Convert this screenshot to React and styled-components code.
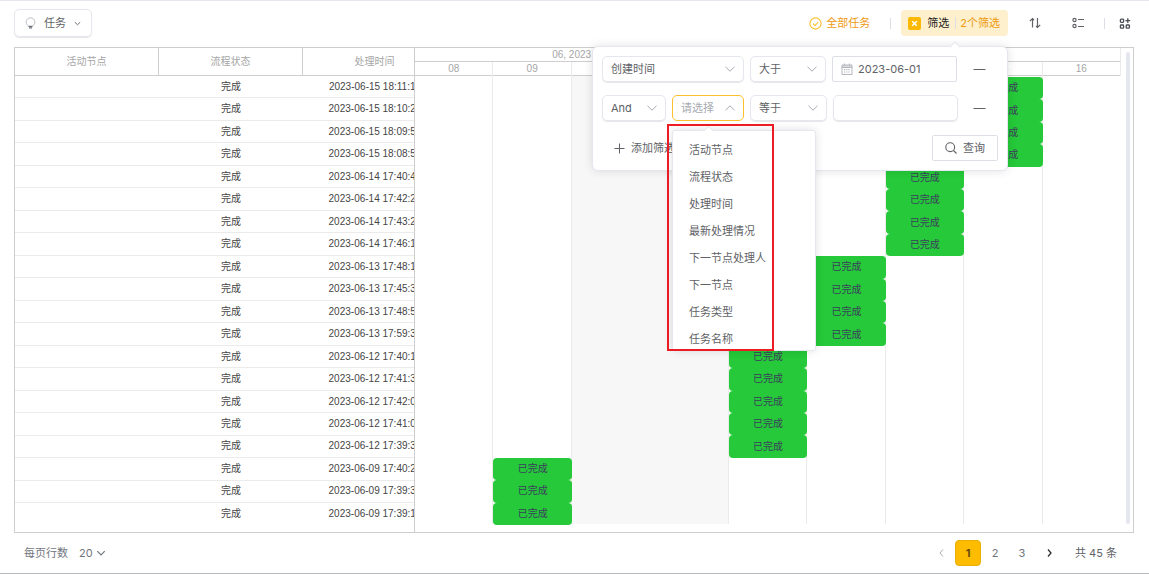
import React from "react"
import styled, { createGlobalStyle } from "styled-components"

const tasks = [
  { time: "2023-06-15 18:11:12", day: 15 },
  { time: "2023-06-15 18:10:28", day: 15 },
  { time: "2023-06-15 18:09:54", day: 15 },
  { time: "2023-06-15 18:08:51", day: 15 },
  { time: "2023-06-14 17:40:47", day: 14 },
  { time: "2023-06-14 17:42:23", day: 14 },
  { time: "2023-06-14 17:43:25", day: 14 },
  { time: "2023-06-14 17:46:18", day: 14 },
  { time: "2023-06-13 17:48:16", day: 13 },
  { time: "2023-06-13 17:45:32", day: 13 },
  { time: "2023-06-13 17:48:53", day: 13 },
  { time: "2023-06-13 17:59:35", day: 13 },
  { time: "2023-06-12 17:40:16", day: 12 },
  { time: "2023-06-12 17:41:36", day: 12 },
  { time: "2023-06-12 17:42:05", day: 12 },
  { time: "2023-06-12 17:41:02", day: 12 },
  { time: "2023-06-12 17:39:33", day: 12 },
  { time: "2023-06-09 17:40:24", day: 9 },
  { time: "2023-06-09 17:39:38", day: 9 },
  { time: "2023-06-09 17:39:14", day: 9 },
]

const days = ["08", "09", "10", "11", "12", "13", "14", "15", "16"]
const weekend = ["10", "11"]
const firstDay = 8

const fields = [
  "活动节点",
  "流程状态",
  "处理时间",
  "最新处理情况",
  "下一节点处理人",
  "下一节点",
  "任务类型",
  "任务名称",
]

const Chevron = ({ size = 12, up = false, strokeWidth = 1 }) => (
  <svg width={size} height={size} viewBox="0 0 12 12" fill="none" stroke="currentColor" strokeWidth={strokeWidth} aria-hidden="true">
    <path d={up ? "M1.5 8.2 6 3.8l4.5 4.4" : "M1.5 3.8 6 8.2l4.5-4.4"} />
  </svg>
)

const Field = ({ label, value, width, open, children }) => (
  <SelectWrap $width={width}>
    <Select aria-label={label} defaultValue={value} $open={open}>
      <option>{value}</option>
    </Select>
    <SelectArrow>
      <Chevron up={open} />
    </SelectArrow>
    {children}
  </SelectWrap>
)

const Minus = () => (
  <svg width="13" height="13" viewBox="0 0 13 13" stroke="currentColor" aria-hidden="true">
    <path d="M0.5 6.5h12" />
  </svg>
)

const FilterPopover = () => (
  <Popover>
    <FilterRow>
      <Field label="字段" value="创建时间" width={142} />
      <Field label="条件" value="大于" width={76} />
      <DateBox>
        <svg width="12" height="12" viewBox="0 0 12 12" fill="none" stroke="#b4b7bd" aria-hidden="true">
          <path d="M1 2h10v9.5H1zM1 3h10M1 4.5h10M3.5 0.5v2M8.5 0.5v2" />
          <path d="M3 6.7h6.5M3 9h6.5" strokeDasharray="1.2 1" strokeWidth="1.2" />
        </svg>
        <DateInput aria-label="日期" defaultValue="2023-06-01" />
      </DateBox>
      <RemoveButton aria-label="删除条件">
        <Minus />
      </RemoveButton>
    </FilterRow>
    <FilterRow>
      <Field label="关系" value="And" width={64} />
      <Field label="字段" value="请选择" width={72} open>
        <Menu role="listbox">
          {fields.map(name => (
            <MenuItem role="option" key={name}>
              {name}
            </MenuItem>
          ))}
        </Menu>
        <MenuTip />
        <Highlight />
      </Field>
      <Field label="条件" value="等于" width={77} />
      <ValueInput aria-label="值" />
      <RemoveButton aria-label="删除条件">
        <Minus />
      </RemoveButton>
    </FilterRow>
    <FilterFooter>
      <AddButton>
        <svg width="11" height="11" viewBox="0 0 11 11" stroke="currentColor" aria-hidden="true">
          <path d="M0.5 5.5h10M5.5 0.5v10" />
        </svg>
        添加筛选
      </AddButton>
      <QueryButton>
        <svg width="12" height="12" viewBox="0 0 12 12" fill="none" stroke="currentColor" strokeWidth="1.1" aria-hidden="true">
          <circle cx="5.2" cy="5.2" r="4.4" />
          <path d="m8.5 8.5 3 3" />
        </svg>
        查询
      </QueryButton>
    </FilterFooter>
  </Popover>
)

const Toolbar = () => (
  <Bar>
    <TaskButton>
      <svg width="11" height="12" viewBox="0 0 11 12" fill="none" stroke="#b4b7bd" strokeWidth="0.9" aria-hidden="true">
        <path d="M3.5 9C2 8.2 1.2 6.8 1.2 5.1a4.3 4.3 0 0 1 8.6 0C9.8 6.8 9 8.2 7.5 9z" />
        <path d="M3.5 9.5h4M4 10.9h3" stroke="#6b6f78" strokeWidth="1.1" />
      </svg>
      任务
      <Chevron size={7} strokeWidth={1.6} />
    </TaskButton>
    <Tools>
      <AllTasks>
        <svg width="13" height="13" viewBox="0 0 13 13" fill="none" stroke="#fbc02d" strokeWidth="1.1" aria-hidden="true">
          <circle cx="6.5" cy="6.5" r="5.6" />
          <path d="m4 6.6 2 2 3.2-3.6" />
        </svg>
        全部任务
      </AllTasks>
      <Divider $after={10} />
      <FilterAnchor>
        <FilterButton>
          <svg width="13" height="13" viewBox="0 0 13 13" aria-hidden="true">
            <rect width="13" height="13" rx="2" fill="#fbb903" />
            <path d="m4.2 4.2 4.6 4.6M8.8 4.2 4.2 8.8" stroke="#fff" strokeWidth="1.5" />
          </svg>
          筛选
          <FilterCount>2个筛选</FilterCount>
        </FilterButton>
        <FilterPopover />
      </FilterAnchor>
      <IconGroup>
        <IconButton aria-label="排序">
          <svg width="12" height="12" viewBox="0 0 12 12" fill="none" stroke="currentColor" strokeWidth="1.2" aria-hidden="true">
            <path d="M3.5 10.5v-9M0.8 4.2l2.7-2.7L5 3M8.5 1v9.500M7 9l1.500 1.500 2.700-2.700" />
          </svg>
        </IconButton>
        <IconButton aria-label="字段">
          <svg width="12" height="12" viewBox="0 0 12 12" fill="none" stroke="currentColor" strokeWidth="1.2" aria-hidden="true">
            <circle cx="2.5" cy="3" r="1.6" />
            <circle cx="2.5" cy="9" r="1.6" />
            <path d="M6 2.5h6M6 9.5h6" />
          </svg>
        </IconButton>
      </IconGroup>
      <Divider $after={14} />
      <IconButton aria-label="更多">
        <svg width="12" height="12" viewBox="0 0 12 12" fill="none" stroke="#4a4d54" strokeWidth="1.3" aria-hidden="true">
          <rect x="1.4" y="2.2" width="3.2" height="3.2" rx="0.8" />
          <rect x="1.4" y="8" width="3.2" height="3.2" rx="0.8" />
          <rect x="7.2" y="8" width="3.2" height="3.2" rx="0.8" />
          <path d="M8.8 1.3v4.800M6.400 3.700h4.800" />
        </svg>
      </IconButton>
    </Tools>
  </Bar>
)

const Gantt = () => (
  <GanttBox>
    <GridPane>
      <TaskTable>
        <thead>
          <tr>
            <HeadCell>活动节点</HeadCell>
            <HeadCell>流程状态</HeadCell>
            <HeadCell>处理时间</HeadCell>
          </tr>
        </thead>
        <tbody>
          {tasks.map((task, i) => (
            <TaskRow key={i}>
              <td />
              <td>完成</td>
              <td>{task.time}</td>
            </TaskRow>
          ))}
        </tbody>
      </TaskTable>
    </GridPane>
    <Timeline>
      <Scale>
        <Month>06, 2023</Month>
      </Scale>
      <Scale>
        {days.map(day => (
          <Day key={day}>{day}</Day>
        ))}
      </Scale>
      <Chart>
        {days.map((day, i) => (
          <DayColumn
            key={day}
            $col={i + 1}
            $weekend={weekend.includes(day)}
            $joined={weekend.includes(day) && weekend.includes(days[i + 1])}
          />
        ))}
        {tasks.map((task, i) => (
          <TaskBar key={i} $row={i + 1} $col={task.day - firstDay + 1}>
            已完成
          </TaskBar>
        ))}
      </Chart>
    </Timeline>
    <ScrollRail>
      <ScrollThumb />
    </ScrollRail>
  </GanttBox>
)

const Pager = () => (
  <Footer>
    <PageSize>
      每页行数
      <SizeSelect defaultValue="20">
        <option>20</option>
      </SizeSelect>
      <Chevron size={10} strokeWidth={1.5} />
    </PageSize>
    <Pages>
      <PageButton aria-label="上一页" $muted>
        <svg width="5" height="8" viewBox="0 0 5 8" fill="none" stroke="currentColor" aria-hidden="true">
          <path d="M4 0.5 1 4l3 3.5" />
        </svg>
      </PageButton>
      <PageButton $active>1</PageButton>
      <PageButton>2</PageButton>
      <PageButton>3</PageButton>
      <PageButton aria-label="下一页" $dark>
        <svg width="5" height="8" viewBox="0 0 5 8" fill="none" stroke="currentColor" strokeWidth="1.3" aria-hidden="true">
          <path d="m1 0.5 3 3.5-3 3.5" />
        </svg>
      </PageButton>
      <Total>共 45 条</Total>
    </Pages>
  </Footer>
)

const App = () => (
  <Page>
    <GlobalStyle />
    <Toolbar />
    <Gantt />
    <Pager />
  </Page>
)

export default App

const GlobalStyle = createGlobalStyle`
  * {
    box-sizing: border-box;
  }

  body {
    margin: 0;
    background: #fff;
    color: #606266;
    font: 11px/16px Inter, "Noto Sans CJK SC", sans-serif;
  }

  button, input, select {
    margin: 0;
    padding: 0;
    border: 0;
    background: none;
    color: inherit;
    font: inherit;
    outline: none;
  }

  svg {
    flex: none;
  }
`
const Page = styled.main`
  display: flex;
  flex-direction: column;
  padding: 0 15px 0 14px;
  border-top: 1px solid #e4e7ed;
  border-bottom: 1px solid #b8b9bd;
`
const Bar = styled.header`
  display: flex;
  align-items: center;
  justify-content: space-between;
  height: 46px;
  padding: 0 3px 2px 0;
`
const TaskButton = styled.button`
  display: flex;
  align-items: center;
  gap: 8px;
  height: 28px;
  padding: 0 10px;
  border: 1px solid #e4e7ed;
  border-radius: 5px;
  box-shadow: 0 1px 1px rgba(0, 0, 0, 0.1);
`
const Tools = styled.div`
  display: flex;
  align-items: center;
`
const AllTasks = styled.button`
  display: flex;
  align-items: center;
  gap: 4px;
  color: #ee9a12;
`
const Divider = styled.span`
  width: 1px;
  height: 11px;
  margin: 0 ${({ $after }) => $after}px 0 20px;
  background: #dcdfe6;
`
const FilterAnchor = styled.div`
  position: relative;
`
const FilterButton = styled.button`
  display: flex;
  align-items: center;
  gap: 6px;
  height: 26px;
  padding: 0 8px 0 7px;
  border-radius: 4px;
  background: #fef0cd;
  color: #1d1e1f;
`
const FilterCount = styled.span`
  padding-left: 4px;
  border-left: 1px solid #dcdfe6;
  line-height: 12px;
  color: #ee9a12;
`
const IconGroup = styled.div`
  display: flex;
  gap: 31px;
  margin-left: 21px;
`
const IconButton = styled.button`
  display: flex;
  align-items: center;
  justify-content: center;
  width: 12px;
  height: 24px;
  color: #606266;
`
const Popover = styled.div`
  position: absolute;
  z-index: 2;
  top: calc(100% + 10px);
  right: 0;
  display: flex;
  flex-direction: column;
  gap: 13px;
  width: 416px;
  padding: 9px;
  border: 1px solid #e4e7ed;
  border-radius: 6px;
  background: #fff;
  box-shadow: 0 0 10px rgba(0, 0, 0, 0.12);

  &::before {
    content: "";
    position: absolute;
    top: -4px;
    right: 48px;
    width: 7px;
    height: 7px;
    background: #fff;
    border: solid #e4e7ed;
    border-width: 1px 0 0 1px;
    transform: rotate(45deg);
  }
`
const FilterRow = styled.div`
  display: flex;
  align-items: center;
  gap: 6px;
`
const SelectWrap = styled.div`
  position: relative;
  width: ${({ $width }) => $width}px;
`
const Select = styled.select`
  appearance: none;
  display: block;
  width: 100%;
  height: 26px;
  padding: 0 8px;
  border: 1px solid ${({ $open }) => ($open ? "#fbc02d" : "#e4e7ed")};
  border-radius: 5px;
  box-shadow: ${({ $open }) => ($open ? "none" : "0 1px 1px rgba(0, 0, 0, 0.1)")};
  color: ${({ $open }) => ($open ? "#a8abb2" : "#606266")};
`
const SelectArrow = styled.span`
  position: absolute;
  top: 7px;
  right: 8px;
  display: flex;
  color: #a8abb2;
  pointer-events: none;
`
const DateBox = styled.label`
  display: flex;
  align-items: center;
  gap: 5px;
  width: 125px;
  height: 26px;
  padding: 0 8px;
  border: 1px solid #dcdfe6;
  border-radius: 2px;
`
const DateInput = styled.input`
  flex: 1;
  min-width: 0;
`
const ValueInput = styled.input`
  width: 125px;
  height: 26px;
  padding: 0 8px;
  border: 1px solid #e4e7ed;
  border-radius: 5px;
  box-shadow: 0 1px 1px rgba(0, 0, 0, 0.1);
`
const RemoveButton = styled.button`
  display: flex;
  margin-left: auto;
  margin-right: 12px;
`
const FilterFooter = styled.div`
  display: flex;
  align-items: center;
  justify-content: space-between;
  padding-top: 1px;
`
const AddButton = styled.button`
  display: flex;
  align-items: center;
  gap: 6px;
  padding-left: 12px;
`
const QueryButton = styled.button`
  display: flex;
  align-items: center;
  gap: 6px;
  height: 26px;
  padding: 0 12px;
  border: 1px solid #dcdfe6;
  border-radius: 2px;
`
const Menu = styled.ul`
  position: absolute;
  z-index: 3;
  top: 35px;
  left: 0;
  width: 144px;
  height: 221px;
  margin: 0;
  padding: 6px 0;
  overflow: hidden;
  list-style: none;
  border: 1px solid #e4e7ed;
  border-radius: 3px;
  background: #fff;
  box-shadow: 0 0 10px rgba(0, 0, 0, 0.12);
`
const MenuItem = styled.li`
  padding: 0 16px;
  line-height: 27px;
  white-space: nowrap;
`
const MenuTip = styled.span`
  position: absolute;
  z-index: 4;
  top: 32px;
  left: 33px;
  width: 7px;
  height: 7px;
  background: #fff;
  border: solid #e4e7ed;
  border-width: 1px 0 0 1px;
  transform: rotate(45deg);
`
const Highlight = styled.span`
  position: absolute;
  z-index: 5;
  top: 29px;
  left: -5px;
  width: 107px;
  height: 227px;
  border: 2px solid #ed1c24;
  pointer-events: none;
`
const GanttBox = styled.section`
  display: flex;
  border: 1px solid #cecece;
  font-family: "Liberation Sans", "Noto Sans CJK SC", sans-serif;
  font-size: 10px;
  line-height: 12px;
`
const GridPane = styled.div`
  flex: none;
  width: 400px;
  overflow: hidden;
  border-right: 1px solid #cecece;
`
const TaskTable = styled.table`
  table-layout: fixed;
  width: 432px;
  height: 476px;
  border-spacing: 0;
  text-align: center;
  color: #454545;

  td {
    padding: 0;
  }
`
const HeadCell = styled.th`
  height: 28px;
  padding: 0;
  border: solid #cecece;
  border-width: 0 1px 1px 0;
  font-weight: 400;
  color: #a6a6a6;
`
const TaskRow = styled.tr`
  &:not(:last-child) td {
    border-bottom: 1px solid #ebebeb;
  }
`
const Timeline = styled.div`
  flex: 1;
  min-width: 0;
  padding-bottom: 8px;
`
const Scale = styled.div`
  display: grid;
  grid-template-columns: repeat(9, 1fr);
  height: 14px;
  border-bottom: 1px solid #cecece;
  line-height: 14px;
  text-align: center;
  color: #a6a6a6;

  &:first-child {
    border-right: 1px solid #ebebeb;
  }
`
const Month = styled.span`
  grid-column: 1 / 5;
`
const Day = styled.span`
  border-right: 1px solid #ebebeb;
`
const Chart = styled.div`
  display: grid;
  grid-template-columns: repeat(9, 1fr);
  grid-template-rows: repeat(20, 1fr);
  height: 448px;
`
const DayColumn = styled.div`
  grid-row: 1 / -1;
  grid-column: ${({ $col }) => $col};
  border-right: ${({ $joined }) => ($joined ? "0" : "1px solid #ebebeb")};
  background: ${({ $weekend }) => ($weekend ? "#f7f7f7" : "none")};

  &:nth-child(9) {
    border-right: 0;
  }
`
const TaskBar = styled.div`
  display: flex;
  align-items: center;
  justify-content: center;
  grid-row: ${({ $row }) => $row};
  grid-column: ${({ $col }) => $col};
  margin: 1px 0 -1px;
  border-radius: 4px;
  background: #25c939;
  color: #3b3f5c;
`
const ScrollRail = styled.div`
  width: 12px;
  padding: 4px 3px 8px 5px;
`
const ScrollThumb = styled.div`
  height: 100%;
  border-radius: 2px;
  background: #e4e7ed;
`
const Footer = styled.footer`
  display: flex;
  align-items: center;
  justify-content: space-between;
  height: 40px;
  padding: 0 17px 0 10px;
`
const PageSize = styled.label`
  display: flex;
  align-items: center;
  gap: 3px;
  color: #71757e;
`
const SizeSelect = styled.select`
  appearance: none;
  margin-left: 8px;
`
const Pages = styled.nav`
  display: flex;
  align-items: center;
  gap: 1px;
`
const PageButton = styled.button`
  display: flex;
  align-items: center;
  justify-content: center;
  width: 26px;
  height: 26px;
  border: 1px solid ${({ $active }) => ($active ? "#e9ae08" : "transparent")};
  border-radius: 4px;
  background: ${({ $active }) => ($active ? "#fdbc00" : "none")};
  font-weight: ${({ $active }) => ($active ? 700 : 400)};
  color: ${({ $active, $muted, $dark }) =>
    $active ? "#6b4a0a" : $muted ? "#a8abb2" : $dark ? "#303133" : "#71757e"};
`
const Total = styled.span`
  margin-left: 12px;
`
